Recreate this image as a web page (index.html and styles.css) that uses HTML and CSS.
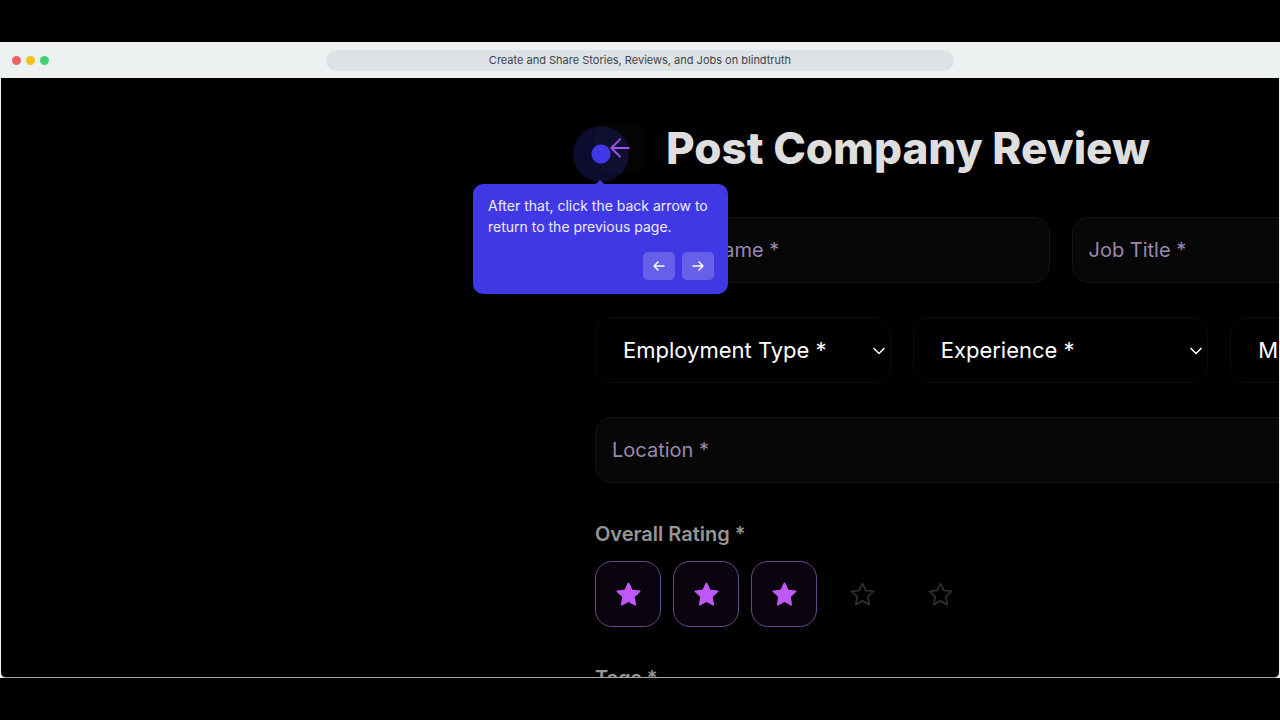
FILE: index.html
```html
<!DOCTYPE html>
<html lang="en">
<head>
    <meta charset="UTF-8">
    <meta name="viewport" content="width=device-width, initial-scale=1.0">
    <title>Create and Share Stories, Reviews, and Jobs on blindtruth</title>
    <link rel="stylesheet" href="styles.css">
</head>
<body>
    <div class="window">
        <header class="titlebar">
            <div class="dots">
                <span class="dot red"></span>
                <span class="dot yellow"></span>
                <span class="dot green"></span>
            </div>
            <div class="address">Create and Share Stories, Reviews, and Jobs on blindtruth</div>
        </header>

        <main class="page">
            <form class="review-form">
                <div class="form-header">
                    <div class="back">
                        <button type="button" class="back-btn" aria-label="Back">
                            <svg width="26" height="26" viewBox="0 0 24 24" fill="none" stroke="currentColor" stroke-width="1.8" stroke-linecap="round" stroke-linejoin="round"><path d="M20 12H4M12 4 4 12l8 8"/></svg>
                        </button>
                        <span class="hotspot"></span>
                        <div class="tour" role="dialog" aria-label="Tour step">
                            <p>After that, click the back arrow to return to the previous page.</p>
                            <div class="tour-nav">
                                <button type="button" aria-label="Previous step">
                                    <svg width="16" height="16" viewBox="0 0 16 16" fill="none" stroke="currentColor" stroke-width="1.5" stroke-linecap="round" stroke-linejoin="round"><path d="M13 8H3M7 4 3 8l4 4"/></svg>
                                </button>
                                <button type="button" aria-label="Next step">
                                    <svg width="16" height="16" viewBox="0 0 16 16" fill="none" stroke="currentColor" stroke-width="1.5" stroke-linecap="round" stroke-linejoin="round"><path d="M3 8h10M9 4l4 4-4 4"/></svg>
                                </button>
                            </div>
                        </div>
                    </div>
                    <h1>Post Company Review</h1>
                </div>

                <div class="row">
                    <input type="text" class="field" placeholder="Company Name *" aria-label="Company Name">
                    <input type="text" class="field" placeholder="Job Title *" aria-label="Job Title">
                </div>

                <div class="row">
                    <div class="select">
                        <select aria-label="Employment Type"><option>Employment Type *</option></select>
                        <svg class="chevron" width="14" height="8" viewBox="0 0 14 8" fill="none" stroke="currentColor" stroke-width="1.5"><path d="M1.500 1 7 6.500 12.500 1"/></svg>
                    </div>
                    <div class="select">
                        <select aria-label="Experience"><option>Experience *</option></select>
                        <svg class="chevron" width="14" height="8" viewBox="0 0 14 8" fill="none" stroke="currentColor" stroke-width="1.5"><path d="M1.500 1 7 6.500 12.500 1"/></svg>
                    </div>
                    <div class="select">
                        <select aria-label="Month"><option>Month *</option></select>
                        <svg class="chevron" width="14" height="8" viewBox="0 0 14 8" fill="none" stroke="currentColor" stroke-width="1.5"><path d="M1.500 1 7 6.500 12.500 1"/></svg>
                    </div>
                </div>

                <div class="row">
                    <input type="text" class="field" placeholder="Location *" aria-label="Location">
                </div>

                <div class="group">
                    <h2>Overall Rating *</h2>
                    <div class="stars">
                        <button type="button" class="star on" aria-label="1 star"><svg viewBox="0 0 24 24"><use href="#star"/></svg></button>
                        <button type="button" class="star on" aria-label="2 stars"><svg viewBox="0 0 24 24"><use href="#star"/></svg></button>
                        <button type="button" class="star on" aria-label="3 stars"><svg viewBox="0 0 24 24"><use href="#star"/></svg></button>
                        <button type="button" class="star" aria-label="4 stars"><svg viewBox="0 0 24 24"><use href="#star"/></svg></button>
                        <button type="button" class="star" aria-label="5 stars"><svg viewBox="0 0 24 24"><use href="#star"/></svg></button>
                    </div>
                </div>

                <div class="group">
                    <h2>Tags *</h2>
                </div>
            </form>
        </main>
    </div>

    <svg class="sprite" aria-hidden="true">
        <symbol id="star" viewBox="0 0 24 24"><path d="M12 2.200l2.900 6.200 7 .8-5.200 4.700 1.300 7.100-6-3.300-6 3.300 1.300-7.100-5.200-4.700 7-.8z"/></symbol>
    </svg>
</body>
</html>
```
FILE: styles.css
```css
* {
    margin: 0;
    padding: 0;
    box-sizing: border-box;
}

body {
    height: 100vh;
    padding: 42px 0;
    background: #000;
    color: #fff;
    font-family: Inter, sans-serif;
    overflow: hidden;
}

button, input, select {
    font: inherit;
    color: inherit;
}

button {
    cursor: pointer;
}

.sprite {
    display: none;
}

/* browser window */
.window {
    height: 100%;
    display: flex;
    flex-direction: column;
    background: #eef1f2;
}

.titlebar {
    flex: none;
    height: 36px;
    padding: 0 12px;
    display: grid;
    grid-template-columns: 1fr 50% 1fr;
    align-items: center;
}

.dots {
    display: flex;
    gap: 5px;
}

.dot {
    width: 9px;
    height: 9px;
    border-radius: 50%;
}

.red { background: #ec6660; }
.yellow { background: #f3c417; }
.green { background: #3fd272; }

.address {
    height: 21px;
    line-height: 21px;
    border-radius: 11px;
    background: #dfe2e4;
    color: #3d434c;
    font-size: 11px;
    text-align: center;
}

.page {
    flex: 1;
    min-height: 0;
    margin: 0 1px;
    padding: 45px 0 0 594px;
    background: #000;
    border-bottom: 1px solid #a6a6a6;
    border-radius: 0 0 5px 5px;
    overflow: hidden;
}

/* form */
.review-form {
    width: 931px;
    display: flex;
    flex-direction: column;
    gap: 34px;
}

.form-header {
    display: flex;
    align-items: center;
    gap: 22px;
    margin-bottom: 10px;
}

h1 {
    color: #dedede;
    font-size: 44px;
    font-weight: 800;
    line-height: 50px;
    white-space: nowrap;
}

.back {
    position: relative;
    width: 49px;
    height: 50px;
}

.back-btn {
    display: flex;
    align-items: center;
    justify-content: center;
    width: 49px;
    height: 50px;
    border: none;
    border-radius: 12px;
    background: #040404;
    color: #b659ee;
}

.row {
    display: flex;
    gap: 22px;
}

.field {
    flex: 1;
    min-width: 0;
    height: 66px;
    padding: 0 16px;
    border: 1px solid #141414;
    border-radius: 17px;
    background: #070707;
    font-size: 20px;
}

.field::placeholder {
    color: #9c86b2;
    opacity: 1;
}

.select {
    flex: 1;
    position: relative;
}

.select select {
    width: 100%;
    height: 66px;
    padding: 0 27px;
    border: 1px solid #0c0c0c;
    border-radius: 17px;
    background: #000;
    font-size: 22px;
    appearance: none;
}

.chevron {
    position: absolute;
    right: 5px;
    top: 30px;
    pointer-events: none;
}

.group {
    display: flex;
    flex-direction: column;
    gap: 10px;
}

h2 {
    color: #969696;
    font-size: 20px;
    font-weight: 600;
    line-height: 34px;
}

.stars {
    display: flex;
    gap: 12px;
}

.star {
    display: flex;
    align-items: center;
    justify-content: center;
    width: 66px;
    height: 66px;
    border: 1px solid #040404;
    border-radius: 17px;
    background: #000;
    color: #2d2d2d;
}

.star svg {
    width: 27px;
    height: 27px;
    fill: none;
    stroke: currentColor;
    stroke-width: 1.6;
    stroke-linejoin: round;
}

.star.on {
    border-color: #69478a;
    background: #0a040e;
    color: #bf58f8;
}

.star.on svg {
    fill: currentColor;
}

/* guided tour */
.hotspot {
    position: absolute;
    left: -22px;
    top: 3px;
    width: 56px;
    height: 56px;
    border-radius: 50%;
    background: radial-gradient(circle, #4038e5 9px, rgba(64, 56, 229, 0.2) 10px);
    pointer-events: none;
}

.tour {
    position: absolute;
    z-index: 2;
    left: -122px;
    top: 61px;
    width: 255px;
    padding: 11px 14px 14px 15px;
    border-radius: 10px;
    background: #4038e5;
    color: #eeecff;
    font-size: 14px;
    line-height: 21px;
}

.tour::before {
    content: "";
    position: absolute;
    left: 123px;
    top: -4px;
    border: 4px solid transparent;
    border-top: none;
    border-bottom-color: #4038e5;
}

.tour-nav {
    display: flex;
    justify-content: flex-end;
    gap: 7px;
    margin-top: 15px;
}

.tour-nav button {
    display: flex;
    align-items: center;
    justify-content: center;
    width: 32px;
    height: 28px;
    border: none;
    border-radius: 5px;
    background: #665fe9;
    color: #fff;
}
```
